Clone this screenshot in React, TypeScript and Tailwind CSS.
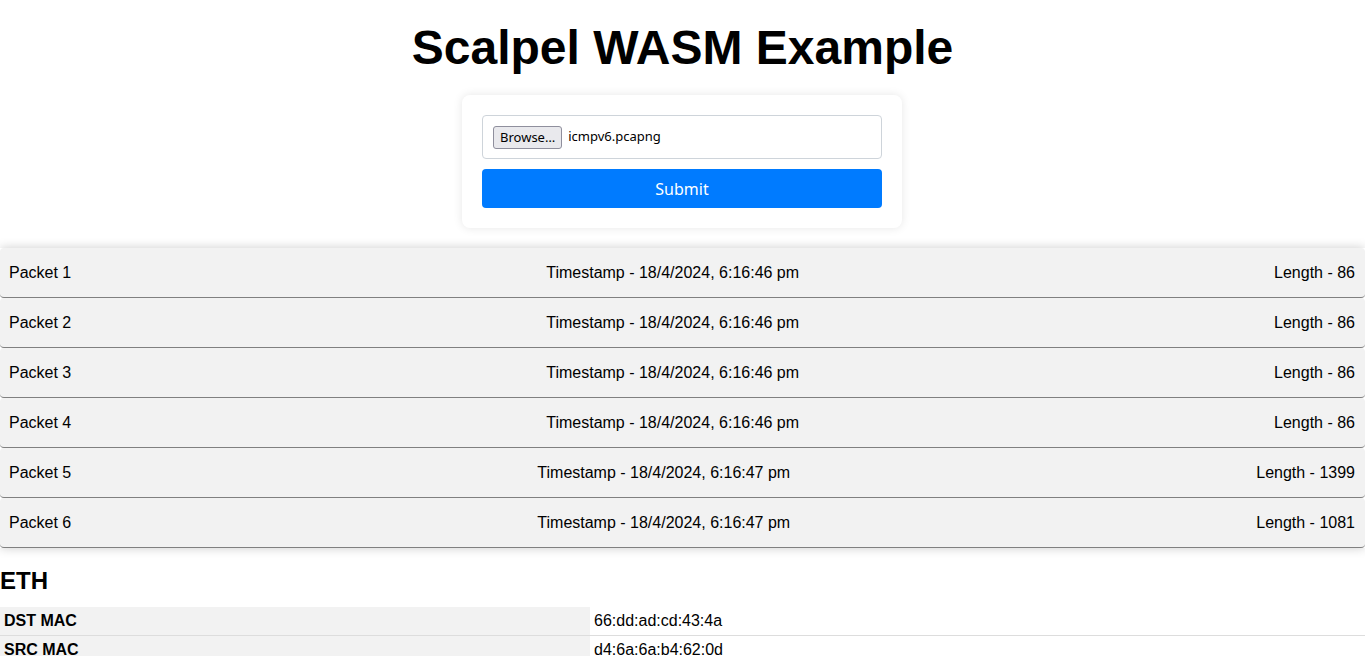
import React from "react";

const packets = [
  { id: 1, time: "18/4/2024, 6:16:46 pm", length: 86 },
  { id: 2, time: "18/4/2024, 6:16:46 pm", length: 86 },
  { id: 3, time: "18/4/2024, 6:16:46 pm", length: 86 },
  { id: 4, time: "18/4/2024, 6:16:46 pm", length: 86 },
  { id: 5, time: "18/4/2024, 6:16:47 pm", length: 1399 },
  { id: 6, time: "18/4/2024, 6:16:47 pm", length: 1081 },
];

const ethFields = [
  { name: "DST MAC", value: "66:dd:ad:cd:43:4a" },
  { name: "SRC MAC", value: "d4:6a:6a:b4:62:0d" },
  { name: "ETHER TYPE", value: "0x86dd" },
];

const App: React.FC = () => {
  return (
    <div className="h-[656px] overflow-hidden bg-white text-black font-['Liberation_Sans',Arial,sans-serif]">
      <h1 className="text-center text-[48px] font-bold leading-[55px] pt-[20px]">Scalpel WASM Example</h1>

      <div className="flex justify-center mt-[20px] pr-px">
        <div className="w-[440px] bg-white rounded-lg shadow-[0_0_10px_rgba(0,0,0,0.1)] p-5">
          <div className="h-[44px] border border-[#ced4da] rounded flex items-center px-[10px] font-['Noto_Sans',sans-serif] text-[13px]">
            <button className="h-[23px] px-[6px] border border-[#8f8f9d] rounded-[3px] bg-[#e9e9ed] text-[13px] leading-none">
              Browse…
            </button>
            <span className="ml-[6px]">icmpv6.pcapng</span>
          </div>
          <button className="mt-[10px] w-full h-[39px] bg-[#007bff] text-white rounded text-[16px] font-['Noto_Sans',sans-serif]">
            Submit
          </button>
        </div>
      </div>

      <div className="mt-[20px] shadow-[0_0_10px_rgba(0,0,0,0.2)] text-[16px]">
        {packets.map((p) => (
          <div
            key={p.id}
            className="h-[50px] bg-[#f2f2f2] border-b border-[#808080] rounded-[4px] flex items-center justify-between pl-[9px] pr-[10px]"
          >
            <span>Packet {p.id}</span>
            <span>Timestamp - {p.time}</span>
            <span>Length - {p.length}</span>
          </div>
        ))}
      </div>

      <h2 className="text-[24px] font-bold leading-[28px] mt-[19px] mb-[12px]">ETH</h2>
      <table className="w-full border-collapse text-[16px]">
        <tbody>
          {ethFields.map((f) => (
            <tr key={f.name} className="border-b border-[#ddd]">
              <td className="w-[590px] bg-[#f2f2f2] font-bold px-[4px] py-[2px]">{f.name}</td>
              <td className="px-[4px] py-[2px]">{f.value}</td>
            </tr>
          ))}
        </tbody>
      </table>
    </div>
  );
};

export default App;
